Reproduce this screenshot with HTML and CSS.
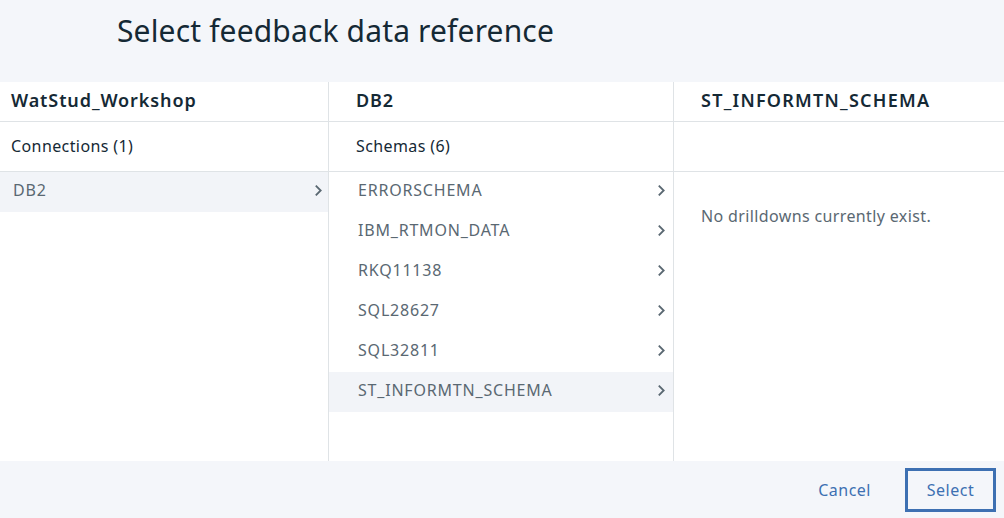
FILE: index.html
```html
<!DOCTYPE html>
<html>
<head>
<meta charset="utf-8">
<link rel="stylesheet" href="styles.css">
</head>
<body>
<div class="dialog">
  <div class="dialog-head">
    <h1 class="title">Select feedback data reference</h1>
  </div>
  <div class="columns">
    <div class="col col-first">
      <div class="col-title">WatStud_Workshop</div>
      <div class="col-sub">Connections (1)</div>
      <ul class="list">
        <li class="item selected"><span>DB2</span><svg class="chev" viewBox="0 0 8 12"><path d="M1.5 1.5 L6 6 L1.5 10.5" /></svg></li>
      </ul>
    </div>
    <div class="col col-mid">
      <div class="col-title">DB2</div>
      <div class="col-sub">Schemas (6)</div>
      <ul class="list">
        <li class="item"><span>ERRORSCHEMA</span><svg class="chev" viewBox="0 0 8 12"><path d="M1.5 1.5 L6 6 L1.5 10.5" /></svg></li>
        <li class="item"><span>IBM_RTMON_DATA</span><svg class="chev" viewBox="0 0 8 12"><path d="M1.5 1.5 L6 6 L1.5 10.5" /></svg></li>
        <li class="item"><span>RKQ11138</span><svg class="chev" viewBox="0 0 8 12"><path d="M1.5 1.5 L6 6 L1.5 10.5" /></svg></li>
        <li class="item"><span>SQL28627</span><svg class="chev" viewBox="0 0 8 12"><path d="M1.5 1.5 L6 6 L1.5 10.5" /></svg></li>
        <li class="item"><span>SQL32811</span><svg class="chev" viewBox="0 0 8 12"><path d="M1.5 1.5 L6 6 L1.5 10.5" /></svg></li>
        <li class="item selected"><span>ST_INFORMTN_SCHEMA</span><svg class="chev" viewBox="0 0 8 12"><path d="M1.5 1.5 L6 6 L1.5 10.5" /></svg></li>
      </ul>
    </div>
    <div class="col col-last">
      <div class="col-title">ST_INFORMTN_SCHEMA</div>
      <div class="col-sub"></div>
      <p class="empty">No drilldowns currently exist.</p>
    </div>
  </div>
  <div class="dialog-foot">
    <button class="btn btn-ghost">Cancel</button>
    <button class="btn btn-primary">Select</button>
  </div>
</div>
</body>
</html>
```
FILE: styles.css
```css
* { box-sizing: border-box; }
html, body { margin: 0; padding: 0; }
body {
  width: 1004px;
  height: 518px;
  overflow: hidden;
  font-family: "Noto Sans", "Open Sans", sans-serif;
  color: #152935;
  background: #f4f6fa;
}
.dialog {
  display: flex;
  flex-direction: column;
  height: 518px;
}
.dialog-head {
  height: 82px;
  background: #f4f6fa;
  padding-left: 117px;
  padding-top: 11px;
}
.title {
  margin: 0;
  font-weight: 400;
  font-size: 30px;
  line-height: 40px;
  color: #152935;
  letter-spacing: 0.15px;
}
.columns {
  display: flex;
  height: 379px;
  background: #fff;
}
.col {
  display: flex;
  flex-direction: column;
}
.col-first { width: 329px; border-right: 1px solid #dfe3e6; }
.col-mid { width: 345px; border-right: 1px solid #dfe3e6; }
.col-last { flex: 1; }
.col-title {
  height: 40px;
  border-bottom: 1px solid #dfe3e6;
  font-size: 18px;
  font-weight: 600;
  line-height: 37px;
  padding-left: 27px;
  color: #152935;
  letter-spacing: 0.9px;
}
.col-last .col-title { letter-spacing: 1.25px; }
.col-sub {
  height: 50px;
  border-bottom: 1px solid #dfe3e6;
  font-size: 16px;
  line-height: 48px;
  padding-left: 27px;
  color: #152935;
  letter-spacing: 0.4px;
}
.col-first .col-title, .col-first .col-sub { padding-left: 11px; }
.list {
  list-style: none;
  margin: 0;
  padding: 0;
}
.item {
  height: 40px;
  display: flex;
  align-items: center;
  justify-content: space-between;
  font-size: 16px;
  color: #5a6872;
  padding-left: 29px;
  padding-right: 7px;
  padding-bottom: 4px;
  letter-spacing: 0.8px;
}
.col-first .item { padding-left: 13px; padding-right: 5px; }
.item.selected { background: #f2f4f8; }
.chev {
  width: 9px;
  height: 13px;
  fill: none;
  stroke: #5a6872;
  stroke-width: 1.7;
}
.empty {
  margin: 0;
  padding: 34px 0 0 27px;
  font-size: 16px;
  line-height: 20px;
  color: #5a6872;
  letter-spacing: 0.37px;
}
.dialog-foot {
  flex: 1;
  display: flex;
  justify-content: flex-end;
  align-items: center;
  gap: 26px;
  padding-right: 8px;
  padding-top: 1px;
  background: #f4f6fa;
}
.btn {
  font-family: inherit;
  font-size: 16px;
  color: #3d70b2;
  background: transparent;
  border: none;
  cursor: pointer;
  letter-spacing: 0.5px;
}
.btn-ghost { padding: 0 8px; height: 44px; }
.btn-primary {
  width: 91px;
  height: 44px;
  border: 3px solid #3d70b2;
  padding: 0;
}
```
